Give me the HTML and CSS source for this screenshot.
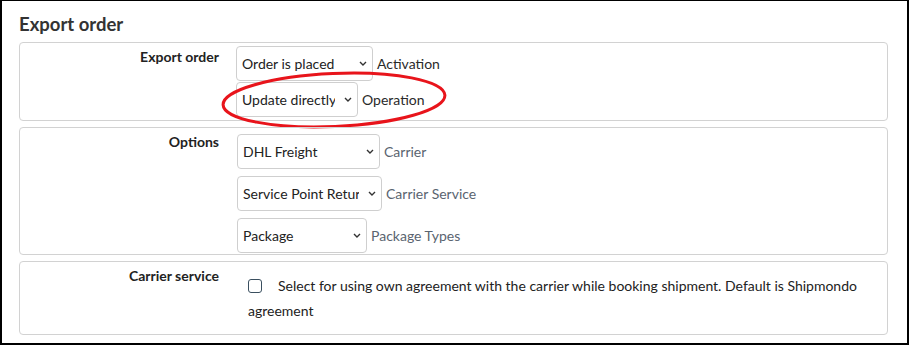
FILE: index.html
```html
<!DOCTYPE html>
<html>
<head>
<meta charset="utf-8">
<link rel="stylesheet" href="styles.css">
</head>
<body>
<div class="frame">
  <h2 class="title">Export order</h2>

  <div class="panel panel-export">
    <div class="label">Export order</div>
    <div class="controls c-export">
      <div class="row"><select class="sel w137"><option>Order is placed</option></select><span class="hint dark">Activation</span></div>
      <div class="row"><select class="sel w122"><option>Update directly</option></select><span class="hint dark">Operation</span></div>
    </div>
    <svg class="ring" width="240" height="70" viewBox="0 0 240 70">
      <ellipse cx="120" cy="35" rx="111" ry="26.5" transform="rotate(-2.5 120 35)" fill="none" stroke="#e8141b" stroke-width="3"/>
    </svg>
  </div>

  <div class="panel panel-options">
    <div class="label">Options</div>
    <div class="controls c-options">
      <div class="row"><select class="sel w143"><option>DHL Freight</option></select><span class="hint">Carrier</span></div>
      <div class="row"><select class="sel w145"><option>Service Point Return</option></select><span class="hint">Carrier Service</span></div>
      <div class="row"><select class="sel w130"><option>Package</option></select><span class="hint">Package Types</span></div>
    </div>
  </div>

  <div class="panel panel-carrier">
    <div class="label">Carrier service</div>
    <div class="controls c-carrier">
      <label class="check"><input type="checkbox" class="cb"><span class="cb-text">Select for using own agreement with the carrier while booking shipment. Default is Shipmondo agreement</span></label>
    </div>
  </div>
</div>
</body>
</html>
```

FILE: styles.css
```css
html, body {
  margin: 0;
  padding: 0;
  background: #fff;
}
body {
  font-family: Lato, "Open Sans", Arial, sans-serif;
  color: #333;
}
.frame {
  box-sizing: border-box;
  width: 909px;
  height: 345px;
  border-style: solid;
  border-color: #000;
  border-width: 1px 2px 2px 2px;
  padding: 0 19px 0 17px;
}
.title {
  margin: 0;
  padding-top: 10px;
  height: 31px;
  font-size: 18.5px;
  font-weight: 700;
  line-height: 26px;
  color: #333;
}
.panel {
  position: relative;
  display: grid;
  grid-template-columns: 199px 1fr;
  column-gap: 17px;
  border: 1px solid #d2d2d2;
  border-radius: 4px;
  margin-bottom: 6px;
}
.label {
  text-align: right;
  font-weight: 700;
  font-size: 14px;
  line-height: 20px;
  padding-top: 4px;
  color: #222;
}
.controls {
  display: flex;
  flex-direction: column;
}
.c-export {
  padding: 3px 0 3px;
  gap: 1px;
}
.c-options {
  padding: 6px 0 1px 1px;
  gap: 7px;
}
.c-carrier {
  padding: 11px 20px 11px 12px;
}
.row {
  display: flex;
  align-items: center;
  gap: 4px;
}
.sel {
  appearance: none;
  -webkit-appearance: none;
  box-sizing: border-box;
  height: 35px;
  font-family: Lato, "Open Sans", Arial, sans-serif;
  font-size: 14px;
  color: #222;
  background-color: #fff;
  background-image: url("data:image/svg+xml;utf8,<svg xmlns='http://www.w3.org/2000/svg' width='8' height='5' viewBox='0 0 8 5'><path d='M1 1 L4 4 L7 1' fill='none' stroke='%23333' stroke-width='1.4'/></svg>");
  background-repeat: no-repeat;
  background-position: right 5px center;
  border: 1px solid #cfcfcf;
  border-radius: 4px;
  padding: 0 22px 0 5px;
  margin: 0;
}
.w137 { width: 137px; }
.w122 { width: 122px; }
.w143 { width: 143px; }
.w145 { width: 145px; }
.w130 { width: 130px; }
.hint {
  font-size: 14px;
  color: #5a6470;
}
.hint.dark {
  color: #2a2a2a;
}
.ring {
  position: absolute;
  left: 194px;
  top: 22px;
  pointer-events: none;
}
.check {
  display: block;
  font-size: 14px;
  line-height: 25px;
  color: #222;
}
.cb {
  appearance: none;
  -webkit-appearance: none;
  box-sizing: border-box;
  width: 14px;
  height: 14px;
  border: 1.5px solid #3a4f5f;
  border-radius: 3px;
  margin: 0 16px 0 0;
  vertical-align: -2px;
  background: #fff;
}
```
